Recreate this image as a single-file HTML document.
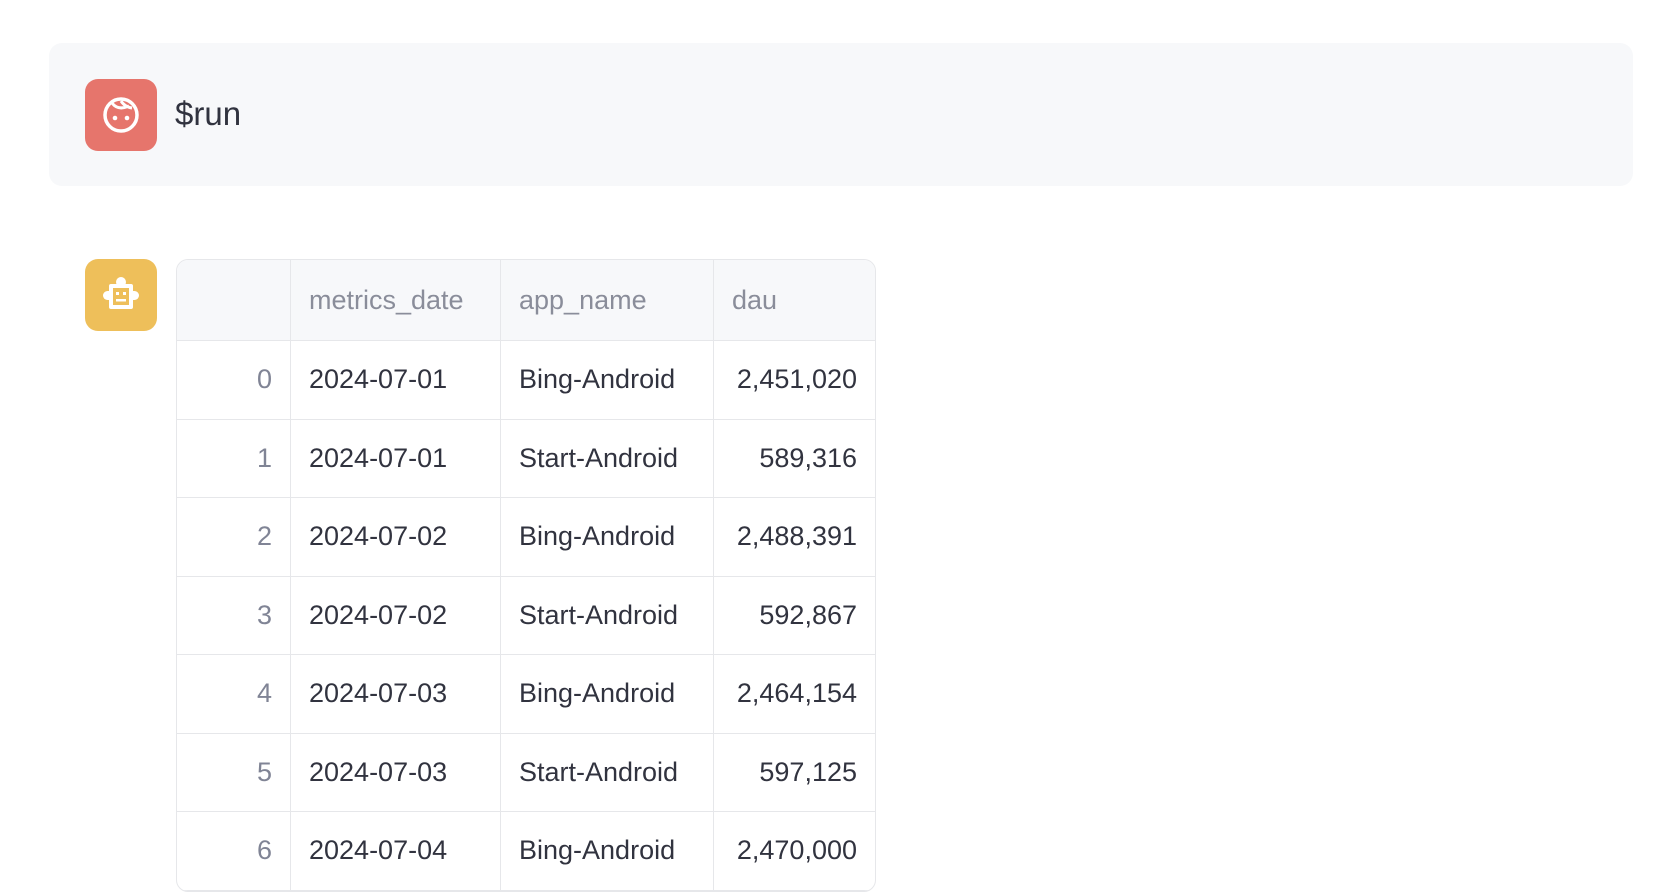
<!DOCTYPE html>
<html><head><meta charset="utf-8"><style>
body{margin:0;width:1671px;height:820px;overflow:hidden;background:#fff;font-family:"Liberation Sans",sans-serif;color:#31333f;position:relative}
.box{position:absolute;left:49px;top:43px;width:1584px;height:143px;background:#f7f8fa;border-radius:13px}
.av{position:absolute;left:85px;width:72px;height:72px;border-radius:13px}
.run{position:absolute;left:175px;top:96px;font-size:33px;line-height:36px}
table{position:absolute;left:176px;top:259px;width:698px;table-layout:fixed;border-collapse:separate;border-spacing:0;border:1.5px solid #e6e7ea;border-radius:12px;overflow:hidden;font-size:27px}
td,th{box-sizing:border-box;border-right:1.5px solid #e6e7ea;border-bottom:1.5px solid #e6e7ea;padding:0 18px;height:78.5px;white-space:nowrap;font-weight:normal}
th{background:#f7f8fa;color:#8a8d9a;text-align:left;height:81px}
tr>*:last-child{border-right:none}
td.i{color:#808495;text-align:right;padding:0 18px 0 0}
td.n{text-align:right}
</style></head><body>
<div class="box"></div>
<div class="av" style="top:79px;background:#e6756c">
<svg width="72" height="72" viewBox="0 0 72 72"><circle cx="36" cy="36" r="16" fill="none" stroke="#fff" stroke-width="3.5"/><path d="M27 24 Q33 32 44 27 M36 22 Q40 28 47 29" fill="none" stroke="#fff" stroke-width="3"/><circle cx="30" cy="39" r="2.3" fill="#fff"/><circle cx="42" cy="39" r="2.3" fill="#fff"/></svg></div>
<div class="run">$run</div>
<div class="av" style="top:259px;background:#eebf5a">
<svg width="72" height="72" viewBox="0 0 72 72"><circle cx="36" cy="23" r="5" fill="#fff"/><rect x="24" y="25" width="24" height="25" rx="2" fill="#fff"/><rect x="18" y="32" width="36" height="9" rx="4.5" fill="#fff"/><rect x="28" y="29" width="16" height="17" fill="#eebf5a"/><rect x="31" y="33" width="3" height="3" fill="#fff"/><rect x="38" y="33" width="3" height="3" fill="#fff"/><rect x="31" y="40" width="10" height="2.5" fill="#fff"/></svg></div>
<table>
<colgroup><col style="width:114px"><col style="width:210px"><col style="width:213px"><col style="width:161px"></colgroup>
<tr><th></th><th>metrics_date</th><th>app_name</th><th>dau</th></tr>
<tr><td class="i">0</td><td>2024-07-01</td><td>Bing-Android</td><td class="n">2,451,020</td></tr>
<tr><td class="i">1</td><td>2024-07-01</td><td>Start-Android</td><td class="n">589,316</td></tr>
<tr><td class="i">2</td><td>2024-07-02</td><td>Bing-Android</td><td class="n">2,488,391</td></tr>
<tr><td class="i">3</td><td>2024-07-02</td><td>Start-Android</td><td class="n">592,867</td></tr>
<tr><td class="i">4</td><td>2024-07-03</td><td>Bing-Android</td><td class="n">2,464,154</td></tr>
<tr><td class="i">5</td><td>2024-07-03</td><td>Start-Android</td><td class="n">597,125</td></tr>
<tr><td class="i">6</td><td>2024-07-04</td><td>Bing-Android</td><td class="n">2,470,000</td></tr>
</table>
</body></html>
